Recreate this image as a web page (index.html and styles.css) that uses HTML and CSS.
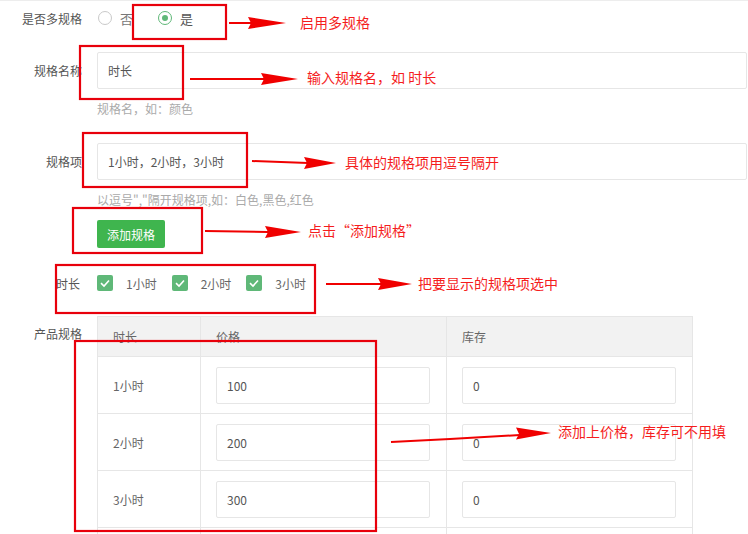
FILE: index.html
```html
<!DOCTYPE html>
<html lang="zh-CN">
<head>
<meta charset="utf-8">
<title>多规格设置</title>
<link rel="stylesheet" href="styles.css">
</head>
<body>
<div class="page">
  <div class="form">
    <div class="row row-radio">
      <div class="label">是否多规格</div>
      <div class="radios">
        <span class="radio"><i class="dot"></i>否</span>
        <span class="radio on"><i class="dot"></i>是</span>
      </div>
    </div>

    <div class="row row-input first-input">
      <div class="label">规格名称</div>
      <div class="input wide">时长</div>
    </div>
    <div class="help">规格名，如：颜色</div>

    <div class="row row-input second-input">
      <div class="label">规格项</div>
      <div class="input wide">1小时，2小时，3小时</div>
    </div>
    <div class="help">以逗号","隔开规格项,如：白色,黑色,红色</div>

    <div class="btn-wrap"><span class="btn">添加规格</span></div>

    <div class="row row-check">
      <div class="label">时长</div>
      <div class="checks">
        <span class="check"><i class="box"><svg viewBox="0 0 16 16" width="16" height="16"><polyline points="4,8.2 7,11 12,5.5" fill="none" stroke="#fff" stroke-width="1.6"/></svg></i>1小时</span>
        <span class="check"><i class="box"><svg viewBox="0 0 16 16" width="16" height="16"><polyline points="4,8.2 7,11 12,5.5" fill="none" stroke="#fff" stroke-width="1.6"/></svg></i>2小时</span>
        <span class="check"><i class="box"><svg viewBox="0 0 16 16" width="16" height="16"><polyline points="4,8.2 7,11 12,5.5" fill="none" stroke="#fff" stroke-width="1.6"/></svg></i>3小时</span>
      </div>
    </div>

    <div class="row row-table">
      <div class="label table-label">产品规格</div>
      <table class="sku">
        <colgroup><col class="c1"><col class="c2"><col class="c3"></colgroup>
        <thead>
          <tr><th>时长</th><th>价格</th><th>库存</th></tr>
        </thead>
        <tbody>
          <tr><td>1小时</td><td><div class="input cell">100</div></td><td><div class="input cell">0</div></td></tr>
          <tr><td>2小时</td><td><div class="input cell">200</div></td><td><div class="input cell">0</div></td></tr>
          <tr><td>3小时</td><td><div class="input cell">300</div></td><td><div class="input cell">0</div></td></tr>
          <tr><td></td><td></td><td></td></tr>
        </tbody>
      </table>
    </div>
  </div>

  <svg class="notes" width="748" height="534" viewBox="0 0 748 534">
    <g fill="none" stroke="#e8000b" stroke-width="2.2">
      <rect x="133" y="4" width="93" height="34"/>
      <rect x="80" y="45" width="103" height="53"/>
      <rect x="83" y="132" width="164" height="54"/>
      <rect x="73" y="207" width="129" height="45"/>
      <rect x="56" y="264" width="259" height="48"/>
      <rect x="75" y="340" width="301" height="190"/>
    </g>
    <g stroke="#f00000" stroke-width="2" fill="#f00000">
      <line x1="229" y1="22" x2="252" y2="22"/>
      <polygon points="248,16 286,22 248,28 251,22" stroke="none"/>
      <line x1="190" y1="78" x2="264" y2="78"/>
      <polygon points="261,72 298,78 261,84 264,78" stroke="none"/>
      <line x1="252" y1="160" x2="308" y2="162"/>
      <polygon points="304,156 336,162 304,168 307,162" stroke="none"/>
      <line x1="205" y1="230" x2="268" y2="231"/>
      <polygon points="265,225 301,231 265,237 268,231" stroke="none"/>
      <line x1="326" y1="283" x2="382" y2="283"/>
      <polygon points="378,277 412,283 378,289 381,283" stroke="none"/>
      <polyline points="391,441 450,438 520,434" fill="none"/>
      <polygon points="516,426.5 551,432 516,438.5 519,433" stroke="none"/>
    </g>
    <g class="note-text" fill="#f51d1d">
      <text x="300" y="27">启用多规格</text>
      <text x="307" y="82">输入规格名，如 时长</text>
      <text x="345" y="167">具体的规格项用逗号隔开</text>
      <text x="308" y="235">点击“添加规格”</text>
      <text x="418" y="288">把要显示的规格项选中</text>
      <text x="558" y="436">添加上价格，库存可不用填</text>
    </g>
  </svg>
</div>
</body>
</html>
```

FILE: styles.css
```css
* { box-sizing: border-box; }
html, body { margin: 0; padding: 0; background: #fff; }
body {
  font-family: "Noto Sans CJK SC", "Noto Sans", sans-serif;
  font-size: 12px;
  color: #666;
}
.page {
  position: relative;
  width: 748px;
  height: 534px;
  overflow: hidden;
  border-top: 1px solid #ededed;
}
.form { padding-top: 0; }
.row { display: flex; align-items: center; }
.label {
  width: 82px;
  flex: 0 0 82px;
  margin-right: 15px;
  text-align: right;
  color: #555;
  white-space: nowrap;
}
.row-radio { height: 34px; }
.radios { display: flex; align-items: center; padding-left: 1px; }
.radio { display: inline-flex; align-items: center; color: #777; font-size: 13px; margin-right: 25px; }
.radio .dot {
  width: 14px; height: 14px; border-radius: 50%;
  border: 1px solid #c9c9c9; margin-right: 8px; position: relative;
}
.radio.on { color: #555; }
.radio.on .dot { border-color: #5fb878; }
.radio.on .dot::after {
  content: ""; position: absolute; left: 3px; top: 3px;
  width: 6px; height: 6px; border-radius: 50%; background: #5fb878;
}
.input {
  height: 37px;
  border: 1px solid #e6e6e6;
  border-radius: 2px;
  background: #fff;
  padding-left: 10px;
  display: flex;
  align-items: center;
  color: #555;
  font-size: 12px;
}
.wide { width: 650px; }
.first-input { margin-top: 17px; }
.second-input { margin-top: 25px; }
.help {
  margin-left: 97px;
  margin-top: 11px;
  line-height: 18px;
  color: #aaa;
}
.btn-wrap { margin-left: 97px; margin-top: 11px; }
.btn {
  display: inline-flex; align-items: center; justify-content: center;
  width: 68px; height: 28px; border-radius: 2px;
  background: #3fb54e; color: #fff; font-size: 12px;
}
.row-check { margin-top: 25px; height: 20px; }
.row-check .label { width: 80px; flex-basis: 80px; margin-right: 17px; }
.checks { display: flex; align-items: center; }
.check { display: inline-flex; align-items: center; margin-right: 15px; color: #666; }
.check .box {
  width: 16px; height: 16px; border-radius: 2px; background: #5fb878;
  margin-right: 13px; display: inline-flex;
}
.row-table { margin-top: 23px; align-items: flex-start; }
.table-label { line-height: 36px; }
.sku {
  border-collapse: collapse;
  width: 596px;
  table-layout: fixed;
}
.sku col.c1 { width: 103px; }
.sku col.c2 { width: 246px; }
.sku col.c3 { width: 246px; }
.sku th, .sku td {
  border: 1px solid #e6e6e6;
  text-align: left;
  font-weight: normal;
  padding: 0 15px;
  color: #666;
}
.sku th { height: 40px; background: #f2f2f2; }
.sku td { height: 57px; }
.sku .cell { width: 214px; }
.notes { position: absolute; left: 0; top: 0; pointer-events: none; }
.note-text text {
  font-family: "Noto Sans CJK SC", sans-serif;
  font-size: 14px;
}
```
